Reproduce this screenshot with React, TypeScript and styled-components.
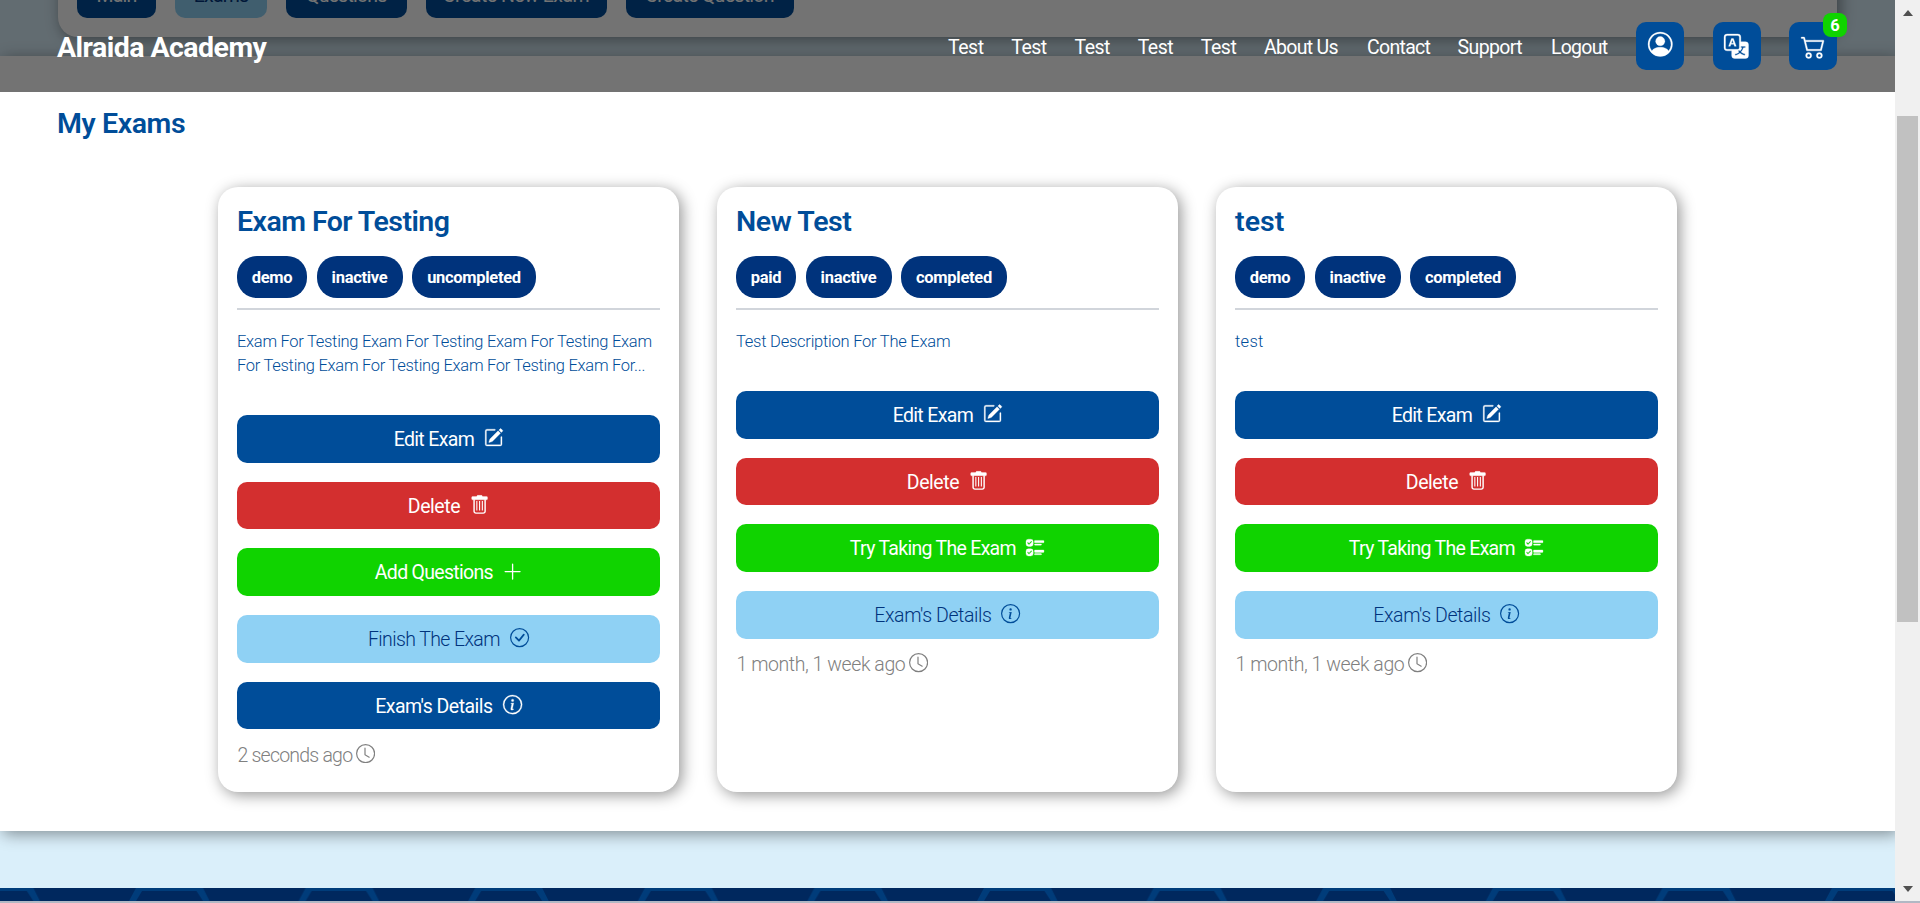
import React from 'react';
import styled, { createGlobalStyle, css } from 'styled-components';
import {
  BsCart2,
  BsCheckCircle,
  BsClock,
  BsInfoCircle,
  BsPencilSquare,
  BsPersonCircle,
  BsTranslate,
  BsUiChecks,
} from 'react-icons/bs';

const color = {
  primary: '#004d99',
  navy: '#00337c',
  sky: '#8fd1f4',
  pale: '#daeffa',
  red: '#d32f2f',
  green: '#10d300',
};

const shadow = '3px 3px 15px rgba(0, 0, 0, 0.42)';

const GlobalStyle = createGlobalStyle`
  * { box-sizing: border-box; }
  body {
    margin: 0;
    overflow: hidden;
    font-family: Roboto, 'Liberation Sans', sans-serif;
    color: ${color.primary};
  }
`;

const Window = styled.div`
  display: flex;
  flex-direction: column;
  width: 1920px;
  height: 903px;
  overflow: hidden;
  background: #fff;
`;

const Viewport = styled.div`
  display: grid;
  grid-template-columns: 1895px 25px;
  height: 901px;
`;

const BottomEdge = styled.div`
  height: 2px;
  background: #b1b8c4;
`;

const Page = styled.div`
  position: relative;
  height: 901px;
  overflow: hidden;
  background: ${color.pale};
`;

const Header = styled.header`
  position: absolute;
  inset: 0 0 auto 0;
  z-index: 5;
  display: flex;
  align-items: center;
  justify-content: space-between;
  height: 92px;
  padding: 0 58px 0 57px;
  background: rgba(0, 0, 0, 0.55);
  color: #fff;
`;

const Brand = styled.div`
  padding-top: 2px;
  font-size: 28.5px;
  font-weight: 700;
  letter-spacing: -0.55px;
  white-space: nowrap;
`;

const HeaderRight = styled.div`
  display: flex;
  align-items: center;
  gap: 28.5px;
`;

const Nav = styled.nav`
  display: flex;
  gap: 28px;
  padding-top: 2px;
`;

const NavLink = styled.a<{ $width: number; $track: number }>`
  width: ${(p) => p.$width}px;
  font-size: 19.5px;
  letter-spacing: ${(p) => p.$track}px;
  white-space: nowrap;
`;

const IconButton = styled.button<{ $lift?: number }>`
  position: relative;
  display: flex;
  align-items: center;
  justify-content: center;
  width: 48px;
  height: 48px;
  padding: 0 0 ${(p) => p.$lift ?? 0}px;
  border: 0;
  border-radius: 10px;
  background: ${color.primary};
  color: #fff;
  svg {
    width: 24.5px;
    height: 24.5px;
    stroke: currentColor;
    stroke-width: 0.2;
    overflow: visible;
  }
`;

const CartCount = styled.span`
  position: absolute;
  top: -9px;
  right: -10px;
  width: 24px;
  height: 24px;
  border-radius: 8px;
  background: ${color.green};
  font: 700 16.5px/25px Roboto, sans-serif;
  text-align: center;
`;

const Scrolled = styled.main`
  margin-top: -49px;
`;

const TabCard = styled.div`
  display: flex;
  gap: 19px;
  width: 1779px;
  height: 86px;
  margin: 0 58px 19px;
  padding: 19px;
  border-radius: 20px;
  background: #fff;
  box-shadow: ${shadow};
`;

const Tab = styled.button<{ $width: number; $track: number; $active?: boolean }>`
  width: ${(p) => p.$width}px;
  height: 48px;
  padding: 2px 0 0;
  border: 0;
  border-radius: 10px;
  background: ${(p) => (p.$active ? color.sky : color.primary)};
  color: ${(p) => (p.$active ? color.navy : '#fff')};
  font: 400 19.5px/48px Roboto, sans-serif;
  letter-spacing: ${(p) => p.$track}px;
  white-space: nowrap;
`;

const Exams = styled.section`
  height: 775px;
  padding: 46px 57px 0;
  background: #fff;
  box-shadow: ${shadow};
`;

const SectionTitle = styled.h2`
  margin: 0 0 41px;
  font-size: 28.5px;
  font-weight: 600;
  line-height: 44px;
  letter-spacing: -0.4px;
`;

const CardGrid = styled.div`
  display: grid;
  grid-template-columns: repeat(3, 461px);
  justify-content: center;
  gap: 38px;
  height: 605px;
`;

const Card = styled.article`
  padding: 19px;
  border-radius: 20px;
  background: #fff;
  box-shadow: ${shadow};
`;

const CardTitle = styled.h3<{ $track: number }>`
  margin: 0 0 19px;
  padding-top: 1px;
  font-size: 28.5px;
  font-weight: 600;
  line-height: 30px;
  letter-spacing: ${(p) => p.$track}px;
`;

const Badges = styled.div`
  display: flex;
  gap: 9.5px;
  padding-bottom: 10px;
  border-bottom: 2px solid #d1d5db;
`;

const Badge = styled.span<{ $width: number }>`
  width: ${(p) => p.$width}px;
  height: 42px;
  border-radius: 20px;
  background: ${color.navy};
  color: #fff;
  font-size: 16.5px;
  font-weight: 700;
  line-height: 43px;
  letter-spacing: -0.3px;
  text-align: center;
`;

const Description = styled.p<{ $track: number }>`
  margin: 20px 0 37px;
  font-size: 16.5px;
  font-weight: 300;
  line-height: 24px;
  letter-spacing: ${(p) => p.$track}px;
  white-space: pre;
`;

const Actions = styled.div`
  display: flex;
  flex-direction: column;
  gap: 19.2px;
`;

type Tone = 'primary' | 'red' | 'green' | 'sky';

const Action = styled.button<{ $tone: Tone; $track: number }>`
  display: flex;
  align-items: center;
  justify-content: center;
  height: 47.5px;
  padding: 1.5px 0 0;
  border: 0;
  border-radius: 10px;
  background: ${(p) => color[p.$tone]};
  color: #fff;
  font: 400 19.5px Roboto, sans-serif;
  letter-spacing: ${(p) => p.$track}px;
  gap: 10px;
  svg {
    width: 19.2px;
    height: 19.2px;
    margin-top: -3px;
    stroke: currentColor;
    stroke-width: 0.25;
    overflow: visible;
  }
  ${(p) =>
    p.$tone === 'sky' &&
    css`
      color: ${color.navy};
      font-weight: 300;
      svg { stroke-width: 0; color: ${color.primary}; }
    `}
`;

const Age = styled.div<{ $track: number }>`
  display: flex;
  align-items: center;
  gap: 4px;
  height: 24px;
  margin-top: 14px;
  padding-left: 0.5px;
  color: #808080;
  font-size: 19.5px;
  font-weight: 300;
  letter-spacing: ${(p) => p.$track}px;
  svg { width: 19.2px; height: 19.2px; margin-top: -3px; }
`;

const Footer = styled.footer`
  height: 13px;
  margin-top: 57px;
  background: #00285e;
  svg { display: block; }
`;

const Scrollbar = styled.div`
  display: flex;
  flex-direction: column;
  align-items: center;
  background: #f0f0f0;
`;

const Thumb = styled.div`
  width: 21px;
  height: 506px;
  margin: 100px 0 264px;
  background: #c1c1c1;
`;

const Arrow = styled.div<{ $down?: boolean }>`
  width: 0;
  height: 0;
  margin-top: ${(p) => (p.$down ? 0 : 10)}px;
  border: solid transparent;
  border-width: ${(p) => (p.$down ? '6px 5.5px 0' : '0 5.5px 6px')};
  border-${(p) => (p.$down ? 'top' : 'bottom')}-color: #505050;
`;

const tabs = [
  { label: 'Main', width: 79, track: -0.8 },
  { label: 'Exams', width: 92, track: -0.8, active: true },
  { label: 'Questions', width: 120.5, track: -0.8 },
  { label: 'Create New Exam', width: 181, track: -0.5 },
  { label: 'Create Question', width: 168, track: -0.7 },
];

const links = [
  { label: 'Test', width: 35.2, track: -0.5 },
  { label: 'Test', width: 35.2, track: -0.5 },
  { label: 'Test', width: 35.2, track: -0.5 },
  { label: 'Test', width: 35.2, track: -0.5 },
  { label: 'Test', width: 35.2, track: -0.5 },
  { label: 'About Us', width: 75, track: -0.7 },
  { label: 'Contact', width: 62.5, track: -0.7 },
  { label: 'Support', width: 65.5, track: -0.6 },
  { label: 'Logout', width: 56.5, track: -0.75 },
];

function TrashIcon() {
  return (
    <svg viewBox="0 0 16 16" fill="none">
      <path d="M1.4 2a.8.8 0 0 1 .8-.8H5.4l.8-.9h3.6l.8.9h3.2a.8.8 0 0 1 .8.8v1.2a.8.8 0 0 1-.8.8H2.2a.8.8 0 0 1-.8-.8Z" fill="currentColor" />
      <path d="M3.4 3.5V13.6a1.5 1.5 0 0 0 1.5 1.5h6.2a1.5 1.5 0 0 0 1.5-1.5V3.5" strokeWidth="1.2" />
      <path d="M5.7 5v8M8 5v8M10.3 5v8" strokeWidth="0.9" />
    </svg>
  );
}

function PlusIcon() {
  return (
    <svg viewBox="0 0 16 16" fill="none">
      <path d="M8 1.8v12.4M1.8 8h12.4" strokeWidth="1.1" strokeLinecap="round" />
    </svg>
  );
}

type ActionData = { label: string; tone: Tone; icon: React.ReactNode; track: number };
type Exam = {
  title: string;
  titleTrack: number;
  badges: [string, number][];
  description: string;
  descriptionTrack: number;
  actions: ActionData[];
  age: string;
  ageTrack: number;
};

const edit: ActionData = { label: 'Edit Exam', tone: 'primary', icon: <BsPencilSquare />, track: -0.65 };
const remove: ActionData = { label: 'Delete', tone: 'red', icon: <TrashIcon />, track: -0.45 };
const details = (tone: Tone): ActionData => ({
  label: "Exam's Details",
  tone,
  icon: <BsInfoCircle />,
  track: tone === 'sky' ? -0.4 : -0.52,
});
const finishedActions: ActionData[] = [
  edit,
  remove,
  { label: 'Try Taking The Exam', tone: 'green', icon: <BsUiChecks />, track: -0.7 },
  details('sky'),
];

const exams: Exam[] = [
  {
    title: 'Exam For Testing',
    titleTrack: -0.55,
    badges: [['demo', 70], ['inactive', 86], ['uncompleted', 124]],
    description:
      'Exam For Testing Exam For Testing Exam For Testing Exam\nFor Testing Exam For Testing Exam For Testing Exam For...',
    descriptionTrack: -0.28,
    actions: [
      edit,
      remove,
      { label: 'Add Questions', tone: 'green', icon: <PlusIcon />, track: -0.7 },
      { label: 'Finish The Exam', tone: 'sky', icon: <BsCheckCircle />, track: -0.6 },
      details('primary'),
    ],
    age: '2 seconds ago',
    ageTrack: -0.78,
  },
  {
    title: 'New Test',
    titleTrack: -0.4,
    badges: [['paid', 60], ['inactive', 86], ['completed', 106]],
    description: 'Test Description For The Exam',
    descriptionTrack: -0.24,
    actions: finishedActions,
    age: '1 month, 1 week ago',
    ageTrack: -0.43,
  },
  {
    title: 'test',
    titleTrack: 0.1,
    badges: [['demo', 70], ['inactive', 86], ['completed', 106]],
    description: 'test',
    descriptionTrack: 0.3,
    actions: finishedActions,
    age: '1 month, 1 week ago',
    ageTrack: -0.43,
  },
];

function FooterPattern() {
  return (
    <svg width="1895" height="13">
      <defs>
        <pattern id="hex" x="129" width="169.6" height="13" patternUnits="userSpaceOnUse">
          <path d="M7 0H74L80.5 13H74L67.5 3H13L7 13H0Z" fill="#003c7a" />
        </pattern>
      </defs>
      <rect width="1895" height="13" fill="url(#hex)" />
    </svg>
  );
}

function ExamCard({ exam }: { exam: Exam }) {
  return (
    <Card>
      <CardTitle $track={exam.titleTrack}>{exam.title}</CardTitle>
      <Badges>
        {exam.badges.map(([label, width]) => (
          <Badge key={label} $width={width}>{label}</Badge>
        ))}
      </Badges>
      <Description $track={exam.descriptionTrack}>{exam.description}</Description>
      <Actions>
        {exam.actions.map((a) => (
          <Action key={a.label} $tone={a.tone} $track={a.track}>
            <span>{a.label}</span>
            {a.icon}
          </Action>
        ))}
      </Actions>
      <Age $track={exam.ageTrack}>
        <span>{exam.age}</span>
        <BsClock />
      </Age>
    </Card>
  );
}

export default function App() {
  return (
    <Window>
      <GlobalStyle />
      <Viewport>
        <Page>
          <Header>
            <Brand>Alraida Academy</Brand>
            <HeaderRight>
              <Nav>
                {links.map((l, i) => (
                  <NavLink key={i} $width={l.width} $track={l.track}>{l.label}</NavLink>
                ))}
              </Nav>
              <IconButton aria-label="Account" $lift={4}><BsPersonCircle /></IconButton>
              <IconButton aria-label="Language"><BsTranslate /></IconButton>
              <IconButton aria-label="Cart">
                <BsCart2 />
                <CartCount>6</CartCount>
              </IconButton>
            </HeaderRight>
          </Header>
          <Scrolled>
            <TabCard>
              {tabs.map((t) => (
                <Tab key={t.label} $width={t.width} $track={t.track} $active={t.active}>{t.label}</Tab>
              ))}
            </TabCard>
            <Exams>
              <SectionTitle>My Exams</SectionTitle>
              <CardGrid>
                {exams.map((exam) => (
                  <ExamCard key={exam.title} exam={exam} />
                ))}
              </CardGrid>
            </Exams>
          </Scrolled>
          <Footer><FooterPattern /></Footer>
        </Page>
        <Scrollbar>
          <Arrow />
          <Thumb />
          <Arrow $down />
        </Scrollbar>
      </Viewport>
      <BottomEdge />
    </Window>
  );
}
